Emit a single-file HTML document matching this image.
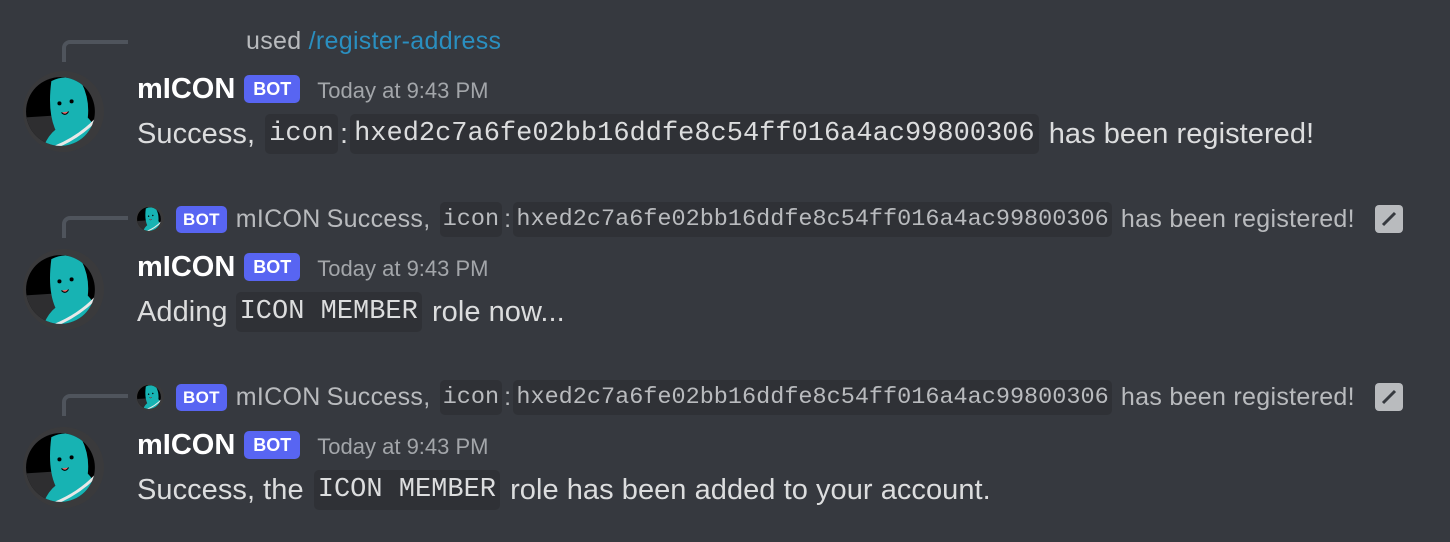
<!DOCTYPE html>
<html><head><meta charset="utf-8"><style>
body{margin:0;width:1450px;height:542px;background:#36393f;overflow:hidden;font-family:"Liberation Sans",sans-serif;position:relative}
.ln{position:absolute;display:flex;align-items:center;white-space:nowrap}
.name{color:#fff;font-size:29px;font-weight:600;letter-spacing:0px}
.bot{background:#5865f2;color:#fff;font-size:18px;font-weight:600;border-radius:5px;height:28px;line-height:28px;padding:0 9px;margin-left:9px}
.ts{color:#a3a6aa;font-size:22px;margin-left:17px;margin-top:4px}
.msg{color:#dcddde;font-size:29px;letter-spacing:0.05px}
code{font-family:"Liberation Mono",monospace;background:#2f3136;border-radius:5px;font-size:27px;padding:5px 4px;margin:0 2px;letter-spacing:0}
.rp{color:#b9bbbe;font-size:25px;letter-spacing:0.3px}
.rp code{font-size:23.5px;padding:4px 3px;margin:0 2px}
.rp .name2{color:#b9bbbe;font-weight:500;font-size:25px;margin:0 6px 0 9px}
.rp .bot{font-size:17px;height:27px;line-height:27px;padding:0 7px;margin-left:12px}
.spine{position:absolute;left:62px;width:66px;height:22px;border-left:4px solid #4f545c;border-top:4px solid #4f545c;border-top-left-radius:8px;box-sizing:border-box}
.av{position:absolute;left:23px;width:81px;height:81px}
.edit{display:inline-block;width:28px;height:28px;background:#b9bbbe;border-radius:4px;margin-left:20px;position:relative}
</style></head><body>

<svg width="0" height="0" style="position:absolute"><defs>
<g id="a">
<circle cx="40" cy="40" r="40" fill="#3a3a3c"/>
<clipPath id="c"><circle cx="37" cy="40" r="34"/></clipPath>
<g clip-path="url(#c)">
<rect width="80" height="80" fill="#000"/>
<path d="M0 46 L32 44 L32 80 L0 80Z" fill="#2e2e30"/>
<path d="M28 10 Q44 2 58 12 Q66 28 64 46 Q76 58 74 80 L18 80 Q24 64 32 58 Q24 40 28 10Z" fill="#17b3b3"/>
<path d="M18 80 Q52 70 74 46" stroke="#e8e8e8" stroke-width="3" fill="none"/>
<circle cx="36" cy="32" r="2" fill="#000"/><circle cx="48" cy="30" r="2" fill="#000"/>
<path d="M38 41 q4 4 7 -1" fill="#e66" stroke="#000" stroke-width="1"/>
</g>
</g></defs></svg>

<div class="spine" style="top:40px"></div>
<div class="ln rp" style="left:246px;top:27px;font-size:25px"><span>used&nbsp;</span><span style="color:#2a8fc0">/register-address</span></div>
<svg class="av" style="top:71px" viewBox="0 0 80 80"><use href="#a"/></svg>
<div class="ln" style="left:137px;top:71px;height:36px"><span class="name">mICON</span><span class="bot">BOT</span><span class="ts">Today at 9:43 PM</span></div>
<div class="ln msg" style="left:137px;top:114px;height:40px">Success,&nbsp;<code>icon</code>:<code>hxed2c7a6fe02bb16ddfe8c54ff016a4ac99800306</code>&nbsp;has been registered!</div>

<div class="spine" style="top:216px"></div>
<div class="ln rp" style="left:136px;top:202px;height:34px"><svg width="28" height="28" viewBox="0 0 80 80"><use href="#a"/></svg><span class="bot">BOT</span><span class="name2">mICON</span>Success,&nbsp;<code>icon</code>:<code>hxed2c7a6fe02bb16ddfe8c54ff016a4ac99800306</code>&nbsp;has been registered!<span class="edit"><svg width="28" height="28"><path d="M8 20 L20 8" stroke="#36393f" stroke-width="3"/></svg></span></div>
<svg class="av" style="top:249px" viewBox="0 0 80 80"><use href="#a"/></svg>
<div class="ln" style="left:137px;top:249px;height:36px"><span class="name">mICON</span><span class="bot">BOT</span><span class="ts">Today at 9:43 PM</span></div>
<div class="ln msg" style="left:137px;top:292px;height:40px">Adding<code style="margin-left:8px">ICON MEMBER</code>&nbsp;role now...</div>

<div class="spine" style="top:394px"></div>
<div class="ln rp" style="left:136px;top:380px;height:34px"><svg width="28" height="28" viewBox="0 0 80 80"><use href="#a"/></svg><span class="bot">BOT</span><span class="name2">mICON</span>Success,&nbsp;<code>icon</code>:<code>hxed2c7a6fe02bb16ddfe8c54ff016a4ac99800306</code>&nbsp;has been registered!<span class="edit"><svg width="28" height="28"><path d="M8 20 L20 8" stroke="#36393f" stroke-width="3"/></svg></span></div>
<svg class="av" style="top:427px" viewBox="0 0 80 80"><use href="#a"/></svg>
<div class="ln" style="left:137px;top:427px;height:36px"><span class="name">mICON</span><span class="bot">BOT</span><span class="ts">Today at 9:43 PM</span></div>
<div class="ln msg" style="left:137px;top:470px;height:40px">Success, the&nbsp;<code>ICON MEMBER</code>&nbsp;role has been added to your account.</div>

</body></html>
